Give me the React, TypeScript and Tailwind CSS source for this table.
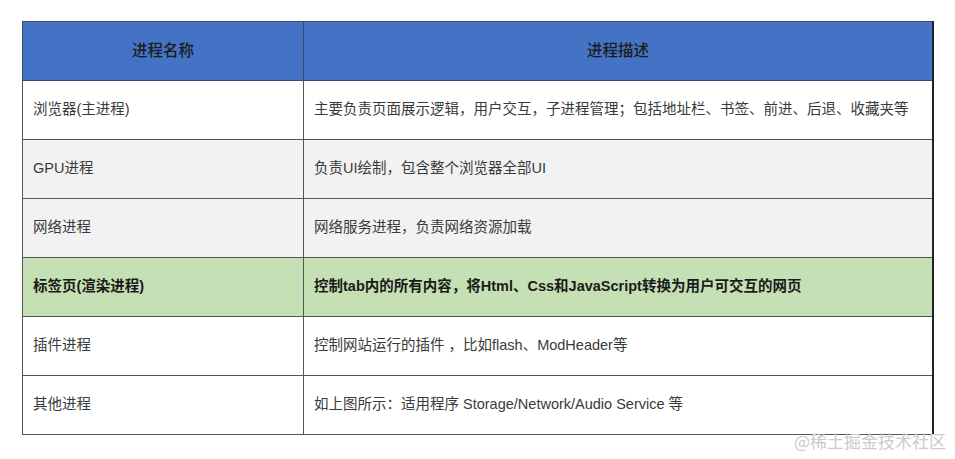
import React from 'react';

interface Row {
  name: string;
  desc: string;
  tone: 'white' | 'gray' | 'green';
}

const rows: Row[] = [
  { name: '浏览器(主进程)', desc: '主要负责页面展示逻辑，用户交互，子进程管理；包括地址栏、书签、前进、后退、收藏夹等', tone: 'white' },
  { name: 'GPU进程', desc: '负责UI绘制，包含整个浏览器全部UI', tone: 'gray' },
  { name: '网络进程', desc: '网络服务进程，负责网络资源加载', tone: 'gray' },
  { name: '标签页(渲染进程)', desc: '控制tab内的所有内容，将Html、Css和JavaScript转换为用户可交互的网页', tone: 'green' },
  { name: '插件进程', desc: '控制网站运行的插件 ，比如flash、ModHeader等', tone: 'white' },
  { name: '其他进程', desc: '如上图所示：适用程序 Storage/Network/Audio Service 等', tone: 'white' },
];

const font = { fontFamily: '"Liberation Sans", "Noto Sans CJK SC", sans-serif' };

export default function App() {
  return (
    <div className="relative w-[955px] h-[459px] bg-white overflow-hidden" style={font}>
      <div className="pt-[21px] pl-[22px]">
        <table className="w-[912px] border-collapse table-fixed">
          <colgroup>
            <col className="w-[281px]" />
            <col />
          </colgroup>
          <thead>
            <tr className="h-[59px] bg-[#4472c4]">
              <th className="border border-[#3b4a66] text-[15.5px] font-medium text-[#1c1c1c] text-center">进程名称</th>
              <th className="border border-[#3b4a66] border-r-2 border-r-[#222] text-[15.5px] font-medium text-[#1c1c1c] text-center">进程描述</th>
            </tr>
          </thead>
          <tbody>
            {rows.map((row) => {
              const bg = row.tone === 'green' ? 'bg-[#c5e0b4]' : row.tone === 'gray' ? 'bg-[#f2f2f2]' : 'bg-white';
              const text = row.tone === 'green' ? 'font-bold text-[#1a1a1a]' : 'text-[#3a3a3a]';
              return (
                <tr key={row.name} className={`h-[59px] ${bg}`}>
                  <td className={`border border-[#555] px-[10px] text-[14.5px] ${text}`}>{row.name}</td>
                  <td className={`border border-[#555] border-r-2 border-r-[#222] px-[10px] text-[14.5px] whitespace-nowrap ${text}`}>{row.desc}</td>
                </tr>
              );
            })}
          </tbody>
        </table>
      </div>
      <div className="absolute right-[9px] bottom-[6px] text-[17px] text-[#cbcbcb]" style={{ fontFamily: '"Noto Sans CJK SC", sans-serif' }}>
        @稀土掘金技术社区
      </div>
    </div>
  );
}
